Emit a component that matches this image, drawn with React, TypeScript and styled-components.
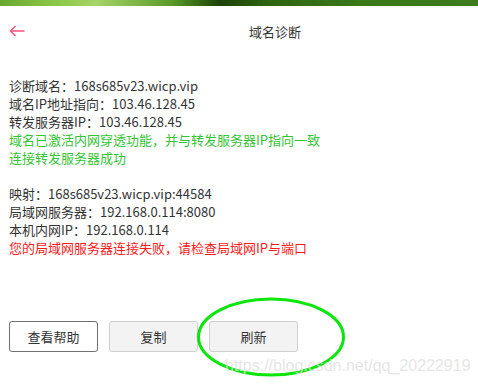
import React from 'react';
import styled, { createGlobalStyle } from 'styled-components';

const GlobalStyle = createGlobalStyle`
  body {
    margin: 0;
    background: #fff;
    font-family: "Noto Sans CJK SC", "Noto Sans", sans-serif;
  }
`;

const info = [
  { text: '诊断域名：168s685v23.wicp.vip' },
  { text: '域名IP地址指向：103.46.128.45' },
  { text: '转发服务器IP：103.46.128.45' },
  { text: '域名已激活内网穿透功能，并与转发服务器IP指向一致', tone: 'ok' },
  { text: '连接转发服务器成功', tone: 'ok' },
];

const mapping = [
  { text: '映射：168s685v23.wicp.vip:44584' },
  { text: '局域网服务器：192.168.0.114:8080' },
  { text: '本机内网IP：192.168.0.114' },
  { text: '您的局域网服务器连接失败，请检查局域网IP与端口', tone: 'bad' },
];

function App() {
  return (
    <Page>
      <GlobalStyle />
      <TopBar />
      <Header>
        <BackButton>
          <svg width="16" height="12" viewBox="0 0 16 12" fill="none">
            <path d="M15.5 6H1.5M6.5 1L1.5 6L6.5 11" stroke="#ff4f80" strokeWidth="1.4" />
          </svg>
        </BackButton>
        <Title>域名诊断</Title>
      </Header>
      <Content>
        <Block>
          {info.map((line, idx) => (
            <Line key={idx} tone={line.tone}>{line.text}</Line>
          ))}
        </Block>
        <Block>
          {mapping.map((line, idx) => (
            <Line key={idx} tone={line.tone}>{line.text}</Line>
          ))}
        </Block>
      </Content>
      <Actions>
        <Button variant="outline">查看帮助</Button>
        <Button>复制</Button>
        <Button>刷新</Button>
      </Actions>
      <Circle width="152" height="84" viewBox="0 0 152 84">
        <ellipse cx="76" cy="42" rx="72.5" ry="38" stroke="#0ae60a" strokeWidth="3" fill="none" />
      </Circle>
      <Watermark>https://blog.csdn.net/qq_20222919</Watermark>
    </Page>
  );
}

export default App;

const Page = styled.div`
  position: relative;
  width: 478px;
  height: 384px;
  overflow: hidden;
  background: #fff;
`;

const TopBar = styled.div`
  height: 6px;
  background: linear-gradient(
    90deg,
    #6aa830 0%,
    #8cc848 12%,
    #a6d468 20%,
    #5a9a28 36%,
    #1c4204 46%,
    #2e6410 56%,
    #3a7818 75%,
    #3c7c1c 100%
  );
`;

const Header = styled.div`
  height: 50px;
  display: flex;
  align-items: center;
  padding: 0 9px;
`;

const BackButton = styled.div`
  width: 16px;
  height: 12px;
  display: flex;
`;

const Title = styled.div`
  flex: 1;
  text-align: center;
  padding-left: 56px;
  font-size: 13px;
  color: #333;
`;

const Content = styled.div`
  padding: 21px 9px 0;
  display: flex;
  flex-direction: column;
  gap: 18px;
`;

const Block = styled.div`
  display: flex;
  flex-direction: column;
`;

const Line = styled.div<{ tone?: string }>`
  font-size: 13px;
  line-height: 18px;
  white-space: nowrap;
  color: ${({ tone }) => (tone === 'ok' ? '#33c533' : tone === 'bad' ? '#ff1a1a' : '#333')};
`;

const Actions = styled.div`
  display: flex;
  gap: 11px;
  padding: 64px 9px 0;
`;

const Button = styled.div<{ variant?: string }>`
  width: 89px;
  height: 31px;
  box-sizing: border-box;
  display: flex;
  align-items: center;
  justify-content: center;
  border-radius: 3px;
  font-size: 13px;
  color: #333;
  border: 1px solid ${({ variant }) => (variant === 'outline' ? '#707070' : '#cfcfcf')};
  background: ${({ variant }) => (variant === 'outline' ? '#fff' : '#f3f3f3')};
`;

const Circle = styled.svg`
  position: absolute;
  left: 195px;
  top: 295px;
`;

const Watermark = styled.div`
  position: absolute;
  left: 225px;
  top: 357px;
  font-family: "Liberation Sans", Arial, sans-serif;
  font-size: 16px;
  color: rgba(225, 225, 225, 0.85);
  white-space: nowrap;
`;
